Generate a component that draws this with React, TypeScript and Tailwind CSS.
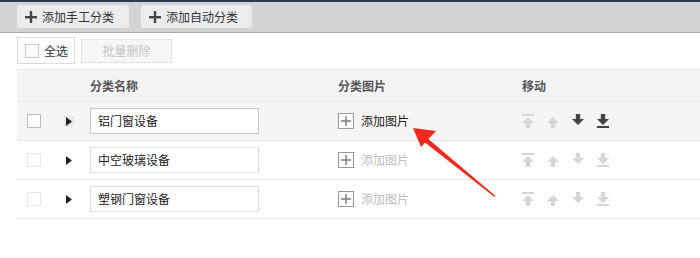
import React from "react";

const rows = [
  { name: "铝门窗设备", active: true },
  { name: "中空玻璃设备", active: false },
  { name: "塑钢门窗设备", active: false },
];

function PlusIcon() {
  return (
    <svg width="12" height="12" viewBox="0 0 12 12">
      <rect x="0" y="5" width="12" height="2.4" fill="#444" />
      <rect x="4.8" y="0" width="2.4" height="12" fill="#444" />
    </svg>
  );
}

function MoveIcon({ kind, color }: { kind: "top" | "up" | "down" | "bottom"; color: string }) {
  const up = kind === "top" || kind === "up";
  return (
    <svg width="12" height="14" viewBox="0 0 12 14">
      <g transform={up ? undefined : "rotate(180 6 7)"} fill={color}>
        {(kind === "top" || kind === "bottom") && <rect x="0" y="0" width="12" height="2" />}
        <polygon points="6,3 12,9 8.2,9 8.2,14 3.8,14 3.8,9 0,9" />
      </g>
    </svg>
  );
}

export default function App() {
  return (
    <div
      className="relative w-[700px] h-[258px] bg-white text-[12px] text-[#333] overflow-hidden"
      style={{ fontFamily: '"Microsoft YaHei", "Noto Sans CJK SC", sans-serif' }}
    >
      <div className="h-[2px] bg-[#2e3b4c]" />

      {/* Toolbar */}
      <div className="h-[31px] bg-[#d4d4d4] border-b border-[#a9a9a9] flex items-start gap-3 pl-[17px] pt-[3px]">
        <button className="h-[23px] w-[112px] rounded-[3px] bg-[#ececec] flex items-center gap-[5px] pl-[8px]">
          <PlusIcon />
          <span>添加手工分类</span>
        </button>
        <button className="h-[23px] w-[111px] rounded-[3px] bg-[#ececec] flex items-center gap-[5px] pl-[8px]">
          <PlusIcon />
          <span>添加自动分类</span>
        </button>
      </div>

      {/* Actions */}
      <div className="flex items-center gap-[6px] pl-[17px] pt-[4px]">
        <label className="h-[27px] w-[58px] border border-[#dcdcdc] flex items-center gap-[5px] pl-[7px]">
          <span className="w-[14px] h-[14px] border border-[#c8c8c8] bg-white" />
          <span>全选</span>
        </label>
        <button className="h-[24px] w-[91px] border border-[#e2e2e2] bg-[#f7f7f7] text-[#c4c4c4]">批量删除</button>
      </div>

      {/* Table */}
      <div className="ml-[17px] mt-[5px]">
        <div className="h-[32px] bg-[#f3f3f3] border-t border-[#e9e9e9] flex items-center font-bold text-[#555]">
          <div className="w-[73px]" />
          <div className="w-[248px]">分类名称</div>
          <div className="w-[184px]">分类图片</div>
          <div>移动</div>
        </div>
        {rows.map((r) => (
          <div
            key={r.name}
            className={`h-[39px] flex items-center border-t border-[#e8e8e8] ${r.active ? "bg-[#f5f5f5]" : "bg-white"}`}
          >
            <div className="w-[47px] flex pl-[10px]">
              <span className={`w-[14px] h-[14px] border bg-white ${r.active ? "border-[#bdbdbd]" : "border-[#e6e6e6]"}`} />
            </div>
            <div className="w-[26px] flex items-center">
              <span className={`flex items-center justify-center w-[10px] h-[11px] ${r.active ? "bg-[#e9e9e9]" : ""}`}>
                <svg width="6" height="9" viewBox="0 0 6 9">
                  <polygon points="0,0 6,4.5 0,9" fill="#222" />
                </svg>
              </span>
            </div>
            <div className="w-[248px]">
              <div className={`w-[169px] h-[26px] bg-white border flex items-center pl-[7px] text-[#222] ${r.active ? "border-[#c6c6c6]" : "border-[#dedede]"}`}>
                {r.name}
              </div>
            </div>
            <div className="w-[184px] flex items-center gap-[7px]">
              <span className="w-[16px] h-[16px] border border-[#999] bg-white flex items-center justify-center">
                <svg width="10" height="10" viewBox="0 0 10 10">
                  <rect x="0" y="4.3" width="10" height="1.4" fill="#777" />
                  <rect x="4.3" y="0" width="1.4" height="10" fill="#777" />
                </svg>
              </span>
              <span className={r.active ? "text-[#222]" : "text-[#bdbdbd]"}>添加图片</span>
            </div>
            <div className="flex items-center gap-[13px]">
              <MoveIcon kind="top" color="#d6d6d6" />
              <MoveIcon kind="up" color="#d6d6d6" />
              <MoveIcon kind="down" color={r.active ? "#444" : "#d6d6d6"} />
              <MoveIcon kind="bottom" color={r.active ? "#444" : "#d6d6d6"} />
            </div>
          </div>
        ))}
        <div className="border-t border-[#e8e8e8]" />
      </div>

      {/* Annotation arrow */}
      <svg className="absolute left-0 top-0 pointer-events-none" width="700" height="258">
        <polygon points="495.5,196 494.5,197 423,141 426,137" fill="#f02a1e" />
        <polygon points="413,128 436,131 421,147" fill="#f02a1e" />
      </svg>
    </div>
  );
}
